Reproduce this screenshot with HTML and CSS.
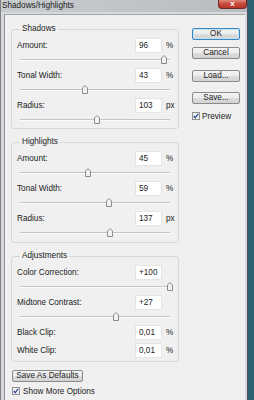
FILE: index.html
```html
<!DOCTYPE html>
<html lang="en">
<head>
  <meta charset="UTF-8" />
  <meta name="viewport" content="width=device-width, initial-scale=1.0" />
  <title>Shadows/Highlights</title>
  <link rel="stylesheet" href="styles.css">
</head>
<body>
  <div class="window">
    <div class="titlebar">
      <span class="title">Shadows/Highlights</span>
      <div class="close-btn">x</div>
    </div>
    <div class="frame">
      <div class="client">
        <div class="left-col">
          <fieldset class="group">
            <legend>Shadows</legend>
            <div class="field"><label>Amount:</label><div class="num">96</div><span class="unit">%</span></div>
            <div class="slider"><div class="track"><svg class="thumb" style="left: 96%" width="6" height="9" viewBox="0 0 6 9"><path d="M0.5 3 L3 0.5 L5.5 3 V8.5 H0.5 Z" /></svg></div></div>
            <div class="field"><label>Tonal Width:</label><div class="num">43</div><span class="unit">%</span></div>
            <div class="slider"><div class="track"><svg class="thumb" style="left: 43%" width="6" height="9" viewBox="0 0 6 9"><path d="M0.5 3 L3 0.5 L5.5 3 V8.5 H0.5 Z" /></svg></div></div>
            <div class="field"><label>Radius:</label><div class="num">103</div><span class="unit">px</span></div>
            <div class="slider"><div class="track"><svg class="thumb" style="left: 51%" width="6" height="9" viewBox="0 0 6 9"><path d="M0.5 3 L3 0.5 L5.5 3 V8.5 H0.5 Z" /></svg></div></div>
          </fieldset>

          <fieldset class="group">
            <legend>Highlights</legend>
            <div class="field"><label>Amount:</label><div class="num">45</div><span class="unit">%</span></div>
            <div class="slider"><div class="track"><svg class="thumb" style="left: 45%" width="6" height="9" viewBox="0 0 6 9"><path d="M0.5 3 L3 0.5 L5.5 3 V8.5 H0.5 Z" /></svg></div></div>
            <div class="field"><label>Tonal Width:</label><div class="num">59</div><span class="unit">%</span></div>
            <div class="slider"><div class="track"><svg class="thumb" style="left: 59%" width="6" height="9" viewBox="0 0 6 9"><path d="M0.5 3 L3 0.5 L5.5 3 V8.5 H0.5 Z" /></svg></div></div>
            <div class="field"><label>Radius:</label><div class="num">137</div><span class="unit">px</span></div>
            <div class="slider"><div class="track"><svg class="thumb" style="left: 60%" width="6" height="9" viewBox="0 0 6 9"><path d="M0.5 3 L3 0.5 L5.5 3 V8.5 H0.5 Z" /></svg></div></div>
          </fieldset>

          <fieldset class="group adjustments">
            <legend>Adjustments</legend>
            <div class="field"><label>Color Correction:</label><div class="num">+100</div><span class="unit"></span></div>
            <div class="slider"><div class="track"><svg class="thumb" style="left: 100%" width="6" height="9" viewBox="0 0 6 9"><path d="M0.5 3 L3 0.5 L5.5 3 V8.5 H0.5 Z" /></svg></div></div>
            <div class="field"><label>Midtone Contrast:</label><div class="num">+27</div><span class="unit"></span></div>
            <div class="slider"><div class="track"><svg class="thumb" style="left: 64%" width="6" height="9" viewBox="0 0 6 9"><path d="M0.5 3 L3 0.5 L5.5 3 V8.5 H0.5 Z" /></svg></div></div>
            <div class="field"><label>Black Clip:</label><div class="num">0,01</div><span class="unit">%</span></div>
            <div class="field clip"><label>White Clip:</label><div class="num">0,01</div><span class="unit">%</span></div>
          </fieldset>

          <button class="btn defaults-btn">Save As Defaults</button>
          <div class="check-row">
            <svg class="checkbox" width="8" height="8" viewBox="0 0 8 8"><rect x="0.5" y="0.5" width="7" height="7" /><path d="M1.8 4 L3.2 5.7 L6.2 1.9" /></svg>
            <span>Show More Options</span>
          </div>
        </div>

        <div class="right-col">
          <button class="btn default">OK</button>
          <button class="btn cancel-btn">Cancel</button>
          <button class="btn load-btn">Load...</button>
          <button class="btn save-btn">Save...</button>
          <div class="check-row preview">
            <svg class="checkbox" width="8" height="8" viewBox="0 0 8 8"><rect x="0.5" y="0.5" width="7" height="7" /><path d="M1.8 4 L3.2 5.7 L6.2 1.9" /></svg>
            <span>Preview</span>
          </div>
        </div>
      </div>
    </div>
  </div>
</body>
</html>
```

FILE: styles.css
```css
* {
  box-sizing: border-box;
}

body {
  margin: 0;
  padding: 0;
  background: #2d6373;
  font-family: 'Liberation Sans', Arial, sans-serif;
  font-size: 8.2px;
  color: #222;
}

.window {
  width: 248px;
  height: 400px;
  display: flex;
  flex-direction: column;
  background: #cdd0d3;
  border-left: 1px solid #7d8287;
  border-right: 1px solid #4e5260;
  overflow: hidden;
}

.titlebar {
  height: 12px;
  display: flex;
  align-items: flex-start;
  background: linear-gradient(to right, #c9cccf, #b9bdc1);
}

.title {
  padding-left: 1px;
  line-height: 12px;
  color: #1c1c1c;
}

.close-btn {
  margin-left: auto;
  width: 29px;
  height: 9px;
  line-height: 8px;
  text-align: center;
  color: #fff;
  font-weight: bold;
  font-size: 8px;
  background: linear-gradient(#e08a80, #c9473b 50%, #b8352a);
  border: 1px solid #6b2a24;
  border-top: none;
  border-radius: 0 0 4px 4px;
}

.frame {
  flex: 1;
  padding: 2px 2px 0 3px;
  background: #d6d8da;
  display: flex;
}

.client {
  flex: 1;
  display: flex;
  padding: 0 5px 0 6px;
  background: #f0f0f0;
  border-left: 1px solid #8f9397;
  border-top: 1px solid #a3a6a9;
}

.left-col {
  width: 168px;
  padding-top: 9px;
  display: flex;
  flex-direction: column;
}

.right-col {
  width: 48px;
  margin-left: 13px;
  padding-top: 13px;
  display: flex;
  flex-direction: column;
}

.group {
  margin: 0 0 8px 0;
  padding: 4px 0 1px 5px;
  min-width: 0;
  border: 1px solid #d3d8dc;
  border-radius: 3px;
}

.group:first-child {
  padding-bottom: 0;
}

.group.adjustments {
  padding-bottom: 3px;
  margin-bottom: 8px;
}

.group legend {
  margin-left: 3px;
  padding: 0 2px;
  line-height: 10px;
  color: #1c1c1c;
}

.field {
  height: 15px;
  display: flex;
  align-items: center;
}

.field.clip {
  margin-top: 3px;
}

.field label {
  flex: 1;
  line-height: 15px;
}

.num {
  width: 27px;
  height: 15px;
  padding-left: 3px;
  line-height: 13px;
  background: #fff;
  border: 1px solid #e4e4e4;
}

.unit {
  width: 16px;
  padding-left: 4px;
}

.slider {
  height: 15px;
  padding: 6px 8px 0 3px;
}

.track {
  position: relative;
  height: 2px;
  border-top: 1px solid #c4c4c4;
  border-bottom: 1px solid #fcfcfc;
}

.thumb {
  position: absolute;
  top: -5px;
  transform: translateX(-50%);
}

.thumb path {
  fill: #f2f2f2;
  stroke: #8b8b8b;
  stroke-width: 1;
}

.btn {
  height: 12px;
  padding: 0;
  font-family: inherit;
  font-size: 8.2px;
  line-height: 10px;
  color: #1c1c1c;
  background: linear-gradient(#f4f4f4, #ececec 50%, #dedede 50%, #d2d2d2);
  border: 1px solid #8a8a8a;
  border-radius: 2px;
}

.btn.default {
  border-color: #3d86bd;
  box-shadow: inset 0 0 0 1px #bfe3f7;
}

.cancel-btn {
  margin-top: 7px;
}

.load-btn {
  margin-top: 11px;
}

.save-btn {
  margin-top: 10px;
}

.defaults-btn {
  width: 71px;
  margin-left: 1px;
}

.check-row {
  height: 10px;
  margin-top: 4px;
  margin-left: 1px;
  display: flex;
  align-items: center;
  gap: 3px;
}

.check-row.preview {
  margin-top: 7px;
  margin-left: 0;
  gap: 2px;
}

.checkbox rect {
  fill: #eef0f3;
  stroke: #8e8f91;
}

.checkbox path {
  fill: none;
  stroke: #2e4a8a;
  stroke-width: 1.2;
}
```
